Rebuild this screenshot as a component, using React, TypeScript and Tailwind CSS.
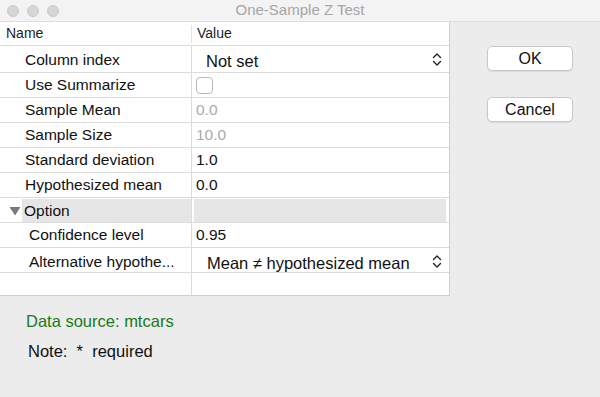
import React from 'react';

const font = { fontFamily: '"Liberation Sans", Arial, sans-serif' };

const UpDown: React.FC = () => (
  <svg width="10" height="15" viewBox="0 0 10 15" fill="none" stroke="#222" strokeWidth="1.4" strokeLinecap="round" strokeLinejoin="round">
    <path d="M1.5 5.5 L5 2 L8.5 5.5" />
    <path d="M1.5 9.5 L5 13 L8.5 9.5" />
  </svg>
);

interface RowProps {
  name: React.ReactNode;
  value?: React.ReactNode;
  h?: string;
  indent?: string;
}

const Row: React.FC<RowProps> = ({ name, value, h = 'h-[25px]', indent = 'pl-[25px]' }) => (
  <div className={`grid grid-cols-[192px_1fr] ${h} border-b border-[#dcdcdc]`}>
    <div className={`flex items-center ${indent} border-r border-[#dcdcdc] text-[15.5px] text-[#111] whitespace-nowrap overflow-hidden`}>{name}</div>
    <div className="flex items-center text-[15.5px] text-[#111]">{value}</div>
  </div>
);

const App: React.FC = () => {
  return (
    <div className="w-[600px] h-[397px] bg-[#ececec] flex flex-col overflow-hidden" style={font}>
      {/* title bar */}
      <div className="h-[22px] bg-[#f3f3f3] border-b border-[#dedede] flex items-center relative">
        <div className="flex gap-[8px] pl-[7px]">
          <span className="w-[12px] h-[12px] rounded-full bg-[#d6d6d6] border border-[#c9c9c9]" />
          <span className="w-[12px] h-[12px] rounded-full bg-[#d6d6d6] border border-[#c9c9c9]" />
          <span className="w-[12px] h-[12px] rounded-full bg-[#d6d6d6] border border-[#c9c9c9]" />
        </div>
        <div className="absolute inset-0 flex items-center justify-center text-[15px] text-[#a6a6a6]">One-Sample Z Test</div>
      </div>

      <div className="flex">
        {/* property table */}
        <div className="w-[450px] bg-white border-r border-[#d0d0d0] border-b">
          <div className="grid grid-cols-[192px_1fr] h-[24px] border-b border-[#dcdcdc]">
            <div className="flex items-center pl-[6px] text-[14px] text-[#222] relative">
              Name
              <span className="absolute right-0 top-[3px] bottom-[2px] w-px bg-[#e2e2e2]" />
            </div>
            <div className="flex items-center pl-[5px] text-[14px] text-[#222]">Value</div>
          </div>
          <Row
            h="h-[27px]"
            name="Column index"
            value={
              <div className="flex items-center justify-between w-full pl-[14px] pr-[7px]">
                <span className="text-[16.5px] pt-[3px]">Not set</span>
                <UpDown />
              </div>
            }
          />
          <Row
            name="Use Summarize"
            value={<span className="ml-[4px] w-[17px] h-[17px] rounded-[4px] border border-[#b9b9b9] bg-white" />}
          />
          <Row name="Sample Mean" value={<span className="pl-[4px] text-[#ababab]">0.0</span>} />
          <Row name="Sample Size" value={<span className="pl-[4px] text-[#ababab]">10.0</span>} />
          <Row name="Standard deviation" value={<span className="pl-[4px]">1.0</span>} />
          <Row name="Hypothesized mean" value={<span className="pl-[4px]">0.0</span>} />
          <div className="grid grid-cols-[192px_1fr] h-[25px] border-b border-[#dcdcdc]">
            <div className="flex items-stretch border-r border-[#dcdcdc]">
              <div className="w-[22px] flex items-center justify-end pr-[1px]">
                <svg width="12" height="10" viewBox="0 0 12 10">
                  <path d="M0.5 1 L11.5 1 L6 9.5 Z" fill="#7a7a7a" />
                </svg>
              </div>
              <div className="flex-1 bg-[#e6e6e6] my-[1px] flex items-center pl-[2px] text-[15.5px] text-[#111]">Option</div>
            </div>
            <div className="bg-[#e6e6e6] mx-[2px] my-[1px] mr-[3px]" />
          </div>
          <Row indent="pl-[29px]" name="Confidence level" value={<span className="pl-[4px]">0.95</span>} />
          <Row
            indent="pl-[29px]"
            name="Alternative hypothe..."
            value={
              <div className="flex items-center justify-between w-full pl-[15px] pr-[7px]">
                <span className="text-[16.5px] pt-[3px]">Mean ≠ hypothesized mean</span>
                <UpDown />
              </div>
            }
          />
          <div className="grid grid-cols-[192px_1fr] h-[22px]">
            <div className="border-r border-[#dcdcdc]" />
            <div />
          </div>
        </div>

        {/* buttons */}
        <div className="flex-1 flex flex-col items-start pl-[37px] pt-[24px] gap-[26px]">
          <button className="w-[86px] h-[25px] rounded-[5px] bg-white border border-[#c8c8c8] shadow-[0_1px_1px_rgba(0,0,0,0.08)] text-[16px] text-[#111]">OK</button>
          <button className="w-[86px] h-[25px] rounded-[5px] bg-white border border-[#c8c8c8] shadow-[0_1px_1px_rgba(0,0,0,0.08)] text-[16px] text-[#111]">Cancel</button>
        </div>
      </div>

      <div className="pl-[26px] pt-[13px] flex flex-col gap-[5px]">
        <div className="text-[16.5px] text-[#1a7a1a]">Data source: mtcars</div>
        <div className="pl-[2px] text-[16.5px] text-[#111]">Note:&nbsp; *&nbsp; required</div>
      </div>
    </div>
  );
};

export default App;
